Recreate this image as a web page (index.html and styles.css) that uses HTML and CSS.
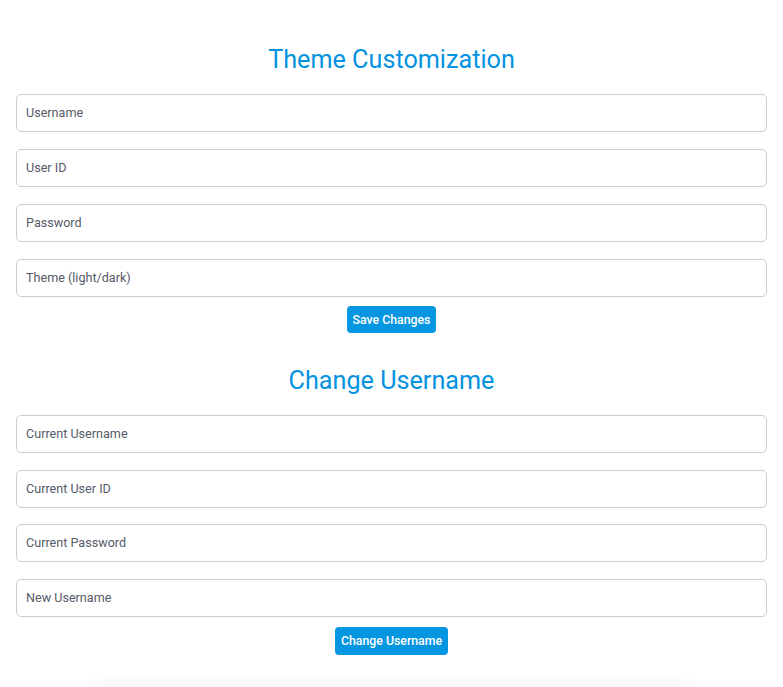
FILE: index.html
```html
<!DOCTYPE html>
<html lang="en">
<head>
<meta charset="utf-8">
<title>Theme Customization</title>
<link rel="stylesheet" href="styles.css">
</head>
<body>
<div class="page">
  <section class="section first">
    <h2 class="title">Theme Customization</h2>
    <form class="form">
      <input class="field" type="text" placeholder="Username">
      <input class="field" type="text" placeholder="User ID">
      <input class="field" type="password" placeholder="Password">
      <input class="field" type="text" placeholder="Theme (light/dark)">
      <button class="btn" type="button">Save Changes</button>
    </form>
  </section>
  <section class="section second">
    <h2 class="title">Change Username</h2>
    <form class="form">
      <input class="field" type="text" placeholder="Current Username">
      <input class="field" type="text" placeholder="Current User ID">
      <input class="field" type="password" placeholder="Current Password">
      <input class="field" type="text" placeholder="New Username">
      <button class="btn" type="button">Change Username</button>
    </form>
  </section>
  <div class="next-card"></div>
</div>
</body>
</html>
```

FILE: styles.css
```css
html, body {
  margin: 0;
  padding: 0;
  background: #ffffff;
}

body {
  font-family: Roboto, "Liberation Sans", Arial, sans-serif;
  overflow: hidden;
}

.page {
  padding: 0 16px;
}

.section.first {
  padding-top: 46px;
}

.section.second {
  padding-top: 34px;
}

.title {
  margin: 0 0 20px;
  font-size: 25.2px;
  line-height: 28px;
  font-weight: 400;
  color: #0493e0;
  text-align: center;
}

.form {
  display: flex;
  flex-direction: column;
  align-items: center;
}

.field {
  box-sizing: border-box;
  width: 100%;
  height: 38px;
  margin: 0 0 17px;
  padding: 0 9px 1px;
  border: 1px solid #cccccc;
  border-radius: 5px;
  font-family: Roboto, "Liberation Sans", Arial, sans-serif;
  font-size: 12.6px;
  color: #333;
  background: #fff;
  outline: none;
}

.second .field {
  margin-bottom: 16.6px;
}

.field:last-of-type {
  margin-bottom: 9px;
}

.second .field:last-of-type {
  margin-bottom: 10px;
}

.field::placeholder {
  color: #555b68;
  opacity: 1;
}

.btn {
  height: 27px;
  padding: 0 6px;
  border: none;
  border-radius: 4px;
  background: #0496e0;
  color: #ffffff;
  font-family: Roboto, "Liberation Sans", Arial, sans-serif;
  font-size: 12.3px;
  font-weight: 500;
  cursor: pointer;
}

.second .btn {
  height: 28px;
}

.next-card {
  width: 600px;
  height: 200px;
  margin: 34px auto 0;
  background: #fff;
  box-shadow: 0 0 22px rgba(0, 0, 0, 0.09);
  border-radius: 8px;
}
```
